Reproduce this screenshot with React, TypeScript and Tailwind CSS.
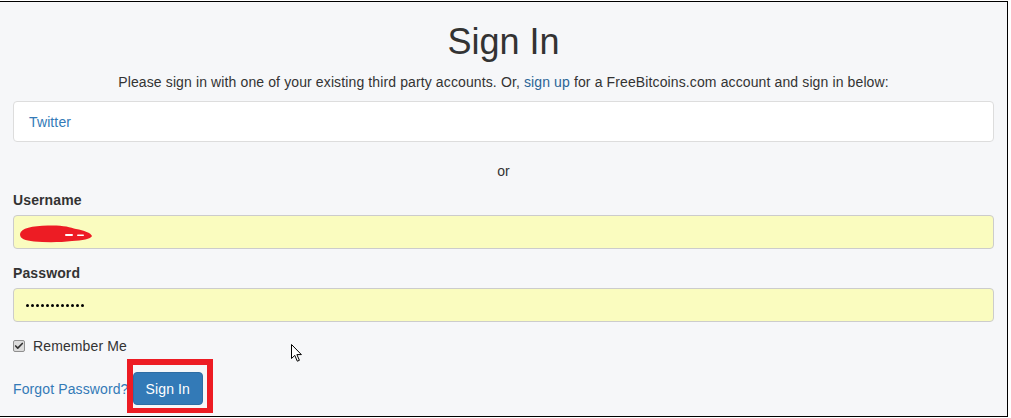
import { Check } from 'lucide-react';

const font = "font-['Liberation_Sans','Helvetica_Neue',Arial,sans-serif]";

// red pen scribble that hides the username
function Scribble() {
  return (
    <svg width="74" height="18" viewBox="0 0 74 18" className="block">
      <path
        d="M0 9 C1 3, 12 1, 28 0.5 C42 0, 50 2, 56 4 C64 5.5, 71 8, 72 11 C71 14, 62 15.5, 52 16 C40 17.5, 26 17.5, 14 16.5 C5 15.5, 0 14, 0 9 Z"
        fill="#ed1c24"
      />
      <rect x="45" y="9" width="8" height="2" rx="1" fill="#fff" />
      <rect x="57" y="9.5" width="7" height="1.5" rx="0.75" fill="#fff" />
    </svg>
  );
}

function Cursor() {
  return (
    <svg width="12" height="19" viewBox="0 0 12 19">
      <path
        d="M0.5 0.5 L0.5 14.5 L3.8 11.4 L6.3 17.2 L8.4 16.3 L5.9 10.6 L10.4 10.6 Z"
        fill="#fff"
        stroke="#000"
        strokeWidth="1"
        strokeLinejoin="round"
      />
    </svg>
  );
}

export default function App() {
  return (
    <div className={`relative h-[418px] w-[1011px] overflow-hidden bg-white pt-px text-[14px] tracking-[0.12px] text-[#333] ${font}`}>
      <div className="h-[416px] w-[1008px] border-t border-r border-b border-black bg-[#f6f7f9] px-[13px]">
        <h1 className="mt-[20px] text-center text-[36px] leading-[39px] font-normal tracking-normal">Sign In</h1>
        <p className="mt-[11px] text-center leading-[20px]">
          Please sign in with one of your existing third party accounts. Or,{' '}
          <a className="text-[#2a6496]">sign up</a> for a FreeBitcoins.com account and sign in below:
        </p>

        <div className="mt-[9px] flex h-[41px] items-center rounded-[4px] border border-[#ddd] bg-white px-[15px] leading-[20px] text-[#337ab7]">
          Twitter
        </div>

        <div className="mt-[19px] text-center leading-[20px]">or</div>

        <label className="mt-[9px] block leading-[20px] font-bold">Username</label>
        <div className="mt-[5px] flex h-[34px] items-start rounded-[4px] border border-[#ccc] bg-[#fafcbf] pt-[9px] pl-[6px]">
          <Scribble />
        </div>

        <label className="mt-[14px] block leading-[20px] font-bold">Password</label>
        <div className="mt-[5px] flex h-[34px] items-center gap-[2px] rounded-[4px] border border-[#ccc] bg-[#fafcbf] px-[12px]">
          {Array.from({ length: 12 }).map((_, i) => (
            <span key={i} className="h-[3px] w-[3px] rounded-full bg-black" />
          ))}
        </div>

        <div className="mt-[14px] flex items-center gap-[8px] leading-[20px]">
          <span className="flex h-[12px] w-[12px] items-center justify-center rounded-[2px] border border-[#8f8f8f] bg-[#dcdcdc]">
            <Check size={10} strokeWidth={4} className="text-[#333]" />
          </span>
          <span>Remember Me</span>
        </div>

        <div className="mt-[16px] flex items-center gap-[4px] leading-[20px]">
          <a className="text-[#337ab7]">Forgot Password?</a>
          <button className="h-[33px] rounded-[4px] border border-[#2e6da4] bg-[#337ab7] px-[12px] text-white">
            Sign In
          </button>
        </div>
      </div>

      {/* annotation around the button */}
      <div className="absolute top-[359px] left-[127px] h-[54px] w-[86px] border-[6px] border-b-[5px] border-[#ed1c24]" />

      <div className="absolute top-[344px] left-[291px]">
        <Cursor />
      </div>
    </div>
  );
}
